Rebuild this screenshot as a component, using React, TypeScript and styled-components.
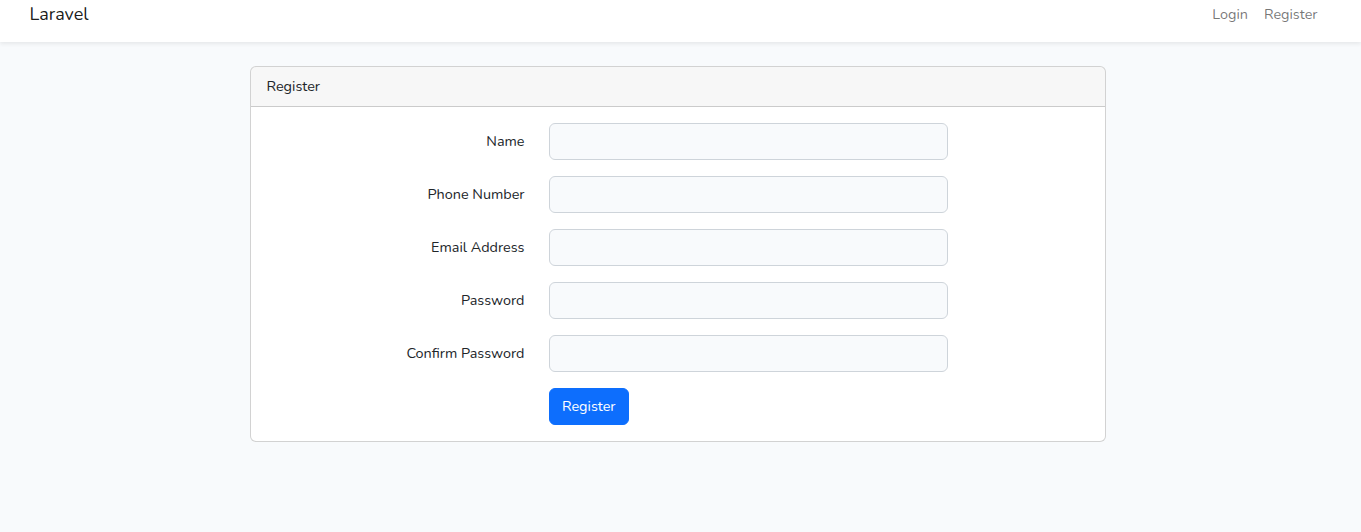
import React from 'react';
import styled, { createGlobalStyle } from 'styled-components';

const GlobalStyle = createGlobalStyle`
  * {
    box-sizing: border-box;
  }

  body {
    margin: 0;
    background: #f8fafc;
    color: #212529;
    font-family: 'Nunito', 'Open Sans', 'Noto Sans', sans-serif;
    font-size: 14.4px;
    line-height: 1.6;
  }

  #root {
    margin-right: 6px;
  }
`;

const Navbar = styled.nav`
  height: 42px;
  margin-right: -6px;
  padding-right: 6px;
  background: #fff;
  box-shadow: 0 2px 4px rgba(0, 0, 0, 0.075);
`;

const NavContainer = styled.div`
  max-width: 1320px;
  margin: 0 auto;
  padding: 0 12px;
  display: flex;
  justify-content: space-between;
  align-items: flex-start;
`;

const Brand = styled.a`
  font-size: 18px;
  line-height: 28px;
  color: rgba(0, 0, 0, 0.9);
  text-decoration: none;
`;

const NavLinks = styled.div`
  display: flex;
`;

const NavLink = styled.a`
  padding: 3px 8px 1px;
  color: rgba(0, 0, 0, 0.55);
  text-decoration: none;
`;

const Main = styled.main`
  padding: 24px 0;
  display: flex;
  justify-content: center;
`;

const Card = styled.div`
  width: 856px;
  background: #fff;
  border: 1px solid rgba(0, 0, 0, 0.175);
  border-radius: 6px;
  overflow: hidden;
`;

const CardHeader = styled.div`
  padding: 8px 16px;
  background: rgba(0, 0, 0, 0.03);
  border-bottom: 1px solid rgba(0, 0, 0, 0.175);
`;

const CardBody = styled.form`
  padding: 16px;
`;

const FormRow = styled.div<{ $last?: boolean }>`
  display: grid;
  grid-template-columns: 4fr 6fr 2fr;
  margin: 0 -12px ${p => (p.$last ? '0' : '16px')};

  & > * {
    margin-left: 12px;
    margin-right: 12px;
  }
`;

const Label = styled.label`
  text-align: right;
  padding: 7px 0;
`;

const Input = styled.input`
  display: block;
  height: 37px;
  padding: 6px 12px;
  font: inherit;
  color: #212529;
  background: #f8fafc;
  border: 1px solid #ced4da;
  border-radius: 6px;
`;

const Button = styled.button`
  justify-self: start;
  height: 37px;
  padding: 6px 12.5px;
  font: inherit;
  color: #fff;
  background: #0d6efd;
  border: 1px solid #0d6efd;
  border-radius: 6px;
`;

const fields = [
  { label: 'Name', type: 'text' },
  { label: 'Phone Number', type: 'tel' },
  { label: 'Email Address', type: 'email' },
  { label: 'Password', type: 'password' },
  { label: 'Confirm Password', type: 'password' },
];

const App: React.FC = () => {
  return (
    <>
      <GlobalStyle />
      <Navbar>
        <NavContainer>
          <Brand href="#">Laravel</Brand>
          <NavLinks>
            <NavLink href="#">Login</NavLink>
            <NavLink href="#">Register</NavLink>
          </NavLinks>
        </NavContainer>
      </Navbar>
      <Main>
        <Card>
          <CardHeader>Register</CardHeader>
          <CardBody onSubmit={e => e.preventDefault()}>
            {fields.map(f => (
              <FormRow key={f.label}>
                <Label>{f.label}</Label>
                <Input type={f.type} />
              </FormRow>
            ))}
            <FormRow $last>
              <span />
              <Button type="submit">Register</Button>
            </FormRow>
          </CardBody>
        </Card>
      </Main>
    </>
  );
};

export default App;
